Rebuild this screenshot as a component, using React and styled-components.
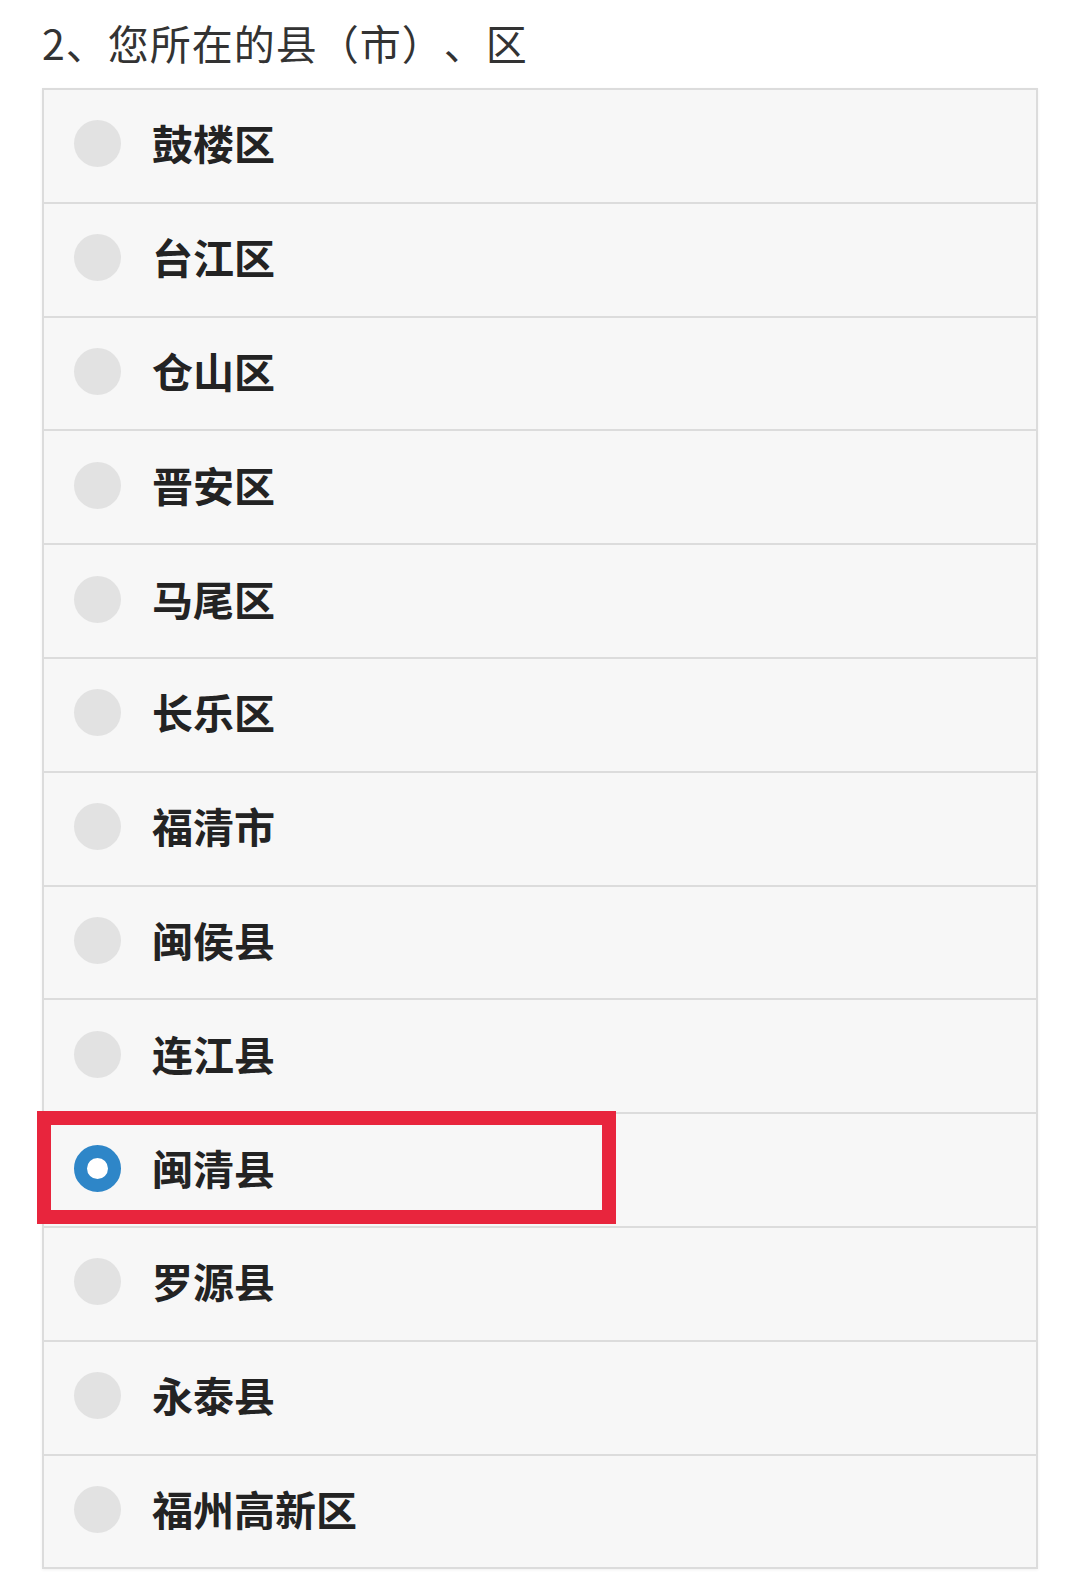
import React, { useState } from 'react'
import styled, { createGlobalStyle } from 'styled-components'

const GlobalStyle = createGlobalStyle`
    body {
        margin: 0;
        background: #ffffff;
        font-family: "Noto Sans CJK SC", "Noto Sans", sans-serif;
    }
`;

const options = [
    '鼓楼区', '台江区', '仓山区', '晋安区', '马尾区', '长乐区', '福清市',
    '闽侯县', '连江县', '闽清县', '罗源县', '永泰县', '福州高新区',
]

export default function App() {
    const [selected, setSelected] = useState('闽清县')

    return (
        <>
            <GlobalStyle />
            <Page>
                <Title>2、您所在的县（市）、区</Title>
                <List>
                    {options.map((name) => (
                        <Row key={name} onClick={() => setSelected(name)}>
                            <Radio checked={selected === name} />
                            <Label>{name}</Label>
                            {selected === name && <Highlight />}
                        </Row>
                    ))}
                </List>
            </Page>
        </>
    )
}

const Page = styled.div`
    width: 1080px;
    padding: 0 0 8px 42px;
    box-sizing: border-box;
`;

const Title = styled.div`
    height: 88px;
    line-height: 84px;
    font-size: 41px;
    color: #333;
    letter-spacing: 1px;
    text-spacing-trim: space-all;
`;

const List = styled.div`
    width: 996px;
    box-sizing: border-box;
    border: 2px solid #dcdcdc;
    border-bottom: none;
    background: #f7f7f7;
    box-shadow: 0 1px 3px rgba(0, 0, 0, 0.06);
`;

const Row = styled.div`
    position: relative;
    height: 113.8px;
    box-sizing: border-box;
    border-bottom: 2px solid #dcdcdc;
    display: flex;
    align-items: center;
    padding: 0 0 4px 30px;
    gap: 31px;
    cursor: pointer;
`;

const Radio = styled.span`
    width: 47px;
    height: 47px;
    border-radius: 50%;
    box-sizing: border-box;
    flex-shrink: 0;
    background: ${props => props.checked ? '#ffffff' : '#e2e2e2'};
    border: ${props => props.checked ? '13px solid #2e86c8' : 'none'};
`;

const Label = styled.span`
    font-size: 41px;
    font-weight: 700;
    color: #232323;
    line-height: 1;
    padding-bottom: 2px;
`;

const Highlight = styled.span`
    position: absolute;
    left: -7px;
    top: -3px;
    width: 579px;
    height: 113px;
    box-sizing: border-box;
    border: 14px solid #e8253d;
    pointer-events: none;
`;
